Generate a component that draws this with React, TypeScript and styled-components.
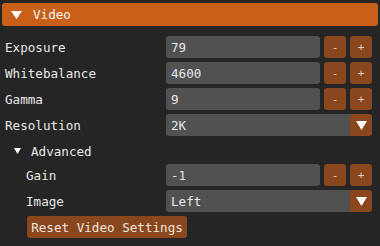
import React from "react";
import styled, { createGlobalStyle } from "styled-components";

const Global = createGlobalStyle`
  html, body { margin: 0; padding: 0; background: #252525; }
  body { font-family: "DejaVu Sans Mono", "Liberation Mono", monospace; font-size: 12.6px; color: #e8e8e8; }
`;

const Panel = styled.div`
  width: 380px;
  height: 246px;
  box-sizing: border-box;
  padding: 3px 2px 0 2px;
  display: flex;
  flex-direction: column;
`;

const Header = styled.div`
  height: 23px;
  background: #c8601a;
  border-radius: 3px;
  display: flex;
  align-items: center;
  gap: 11px;
  padding-left: 9px;
  margin-bottom: 10px;
  color: #f4f4f4;
`;

const Body = styled.div`
  display: flex;
  flex-direction: column;
  gap: 4px;
  padding-left: 3px;
`;

const Row = styled.div<{ $indent?: number }>`
  display: flex;
  align-items: center;
  height: 22px;
  padding-left: ${(p) => p.$indent ?? 0}px;
`;

const Label = styled.div<{ $indent?: number }>`
  width: ${(p) => 161 - (p.$indent ?? 0)}px;
  flex: none;
`;

const Field = styled.div<{ $w: number }>`
  width: ${(p) => p.$w}px;
  height: 22px;
  box-sizing: border-box;
  background: #515151;
  border-radius: 3px;
  padding-left: 5px;
  display: flex;
  align-items: center;
  overflow: hidden;
`;

const Step = styled.div`
  width: 22px;
  height: 22px;
  margin-left: 4px;
  background: #8a471d;
  border-radius: 3px;
  display: flex;
  align-items: center;
  justify-content: center;
  color: #e0d2c6;
  font-size: 11px;
`;

const ComboBox = styled.div`
  width: 206px;
  height: 22px;
  display: flex;
  border-radius: 3px;
  overflow: hidden;
`;

const ComboValue = styled.div`
  flex: 1;
  background: #515151;
  padding-left: 5px;
  display: flex;
  align-items: center;
`;

const ComboArrow = styled.div`
  width: 22px;
  background: #8a471d;
  display: flex;
  align-items: center;
  justify-content: center;
`;

const TreeRow = styled.div`
  height: 20px;
  box-sizing: border-box;
  display: flex;
  align-items: center;
  gap: 10px;
  padding-left: 9px;
  padding-top: 2px;
`;

const ResetButton = styled.div`
  margin-left: 22px;
  width: 160px;
  height: 22px;
  background: #8a471d;
  border-radius: 3px;
  display: flex;
  align-items: center;
  justify-content: center;
  color: #f0e6dd;
`;

const Tri = ({ w, h }: { w: number; h: number }) => (
  <svg width={w} height={h} viewBox={`0 0 ${w} ${h}`}>
    <polygon points={`0,0 ${w},0 ${w / 2},${h}`} fill="#ffffff" />
  </svg>
);

const Stepper = ({ label, value, indent }: { label: string; value: string; indent?: number }) => (
  <Row $indent={indent}>
    <Label $indent={indent}>{label}</Label>
    <Field $w={154}>{value}</Field>
    <Step>-</Step>
    <Step>+</Step>
  </Row>
);

const Combo = ({ label, value, indent }: { label: string; value: string; indent?: number }) => (
  <Row $indent={indent}>
    <Label $indent={indent}>{label}</Label>
    <ComboBox>
      <ComboValue>{value}</ComboValue>
      <ComboArrow>
        <Tri w={11} h={9} />
      </ComboArrow>
    </ComboBox>
  </Row>
);

export default function App() {
  return (
    <>
      <Global />
      <Panel>
        <Header>
          <Tri w={11} h={8} />
          <span>Video</span>
        </Header>
        <Body>
          <Stepper label="Exposure" value="79" />
          <Stepper label="Whitebalance" value="4600" />
          <Stepper label="Gamma" value="9" />
          <Combo label="Resolution" value="2K" />
          <TreeRow>
            <Tri w={7} h={6} />
            <span>Advanced</span>
          </TreeRow>
          <Stepper label="Gain" value="-1" indent={21} />
          <Combo label="Image" value="Left" indent={21} />
          <ResetButton>Reset Video Settings</ResetButton>
        </Body>
      </Panel>
    </>
  );
}
